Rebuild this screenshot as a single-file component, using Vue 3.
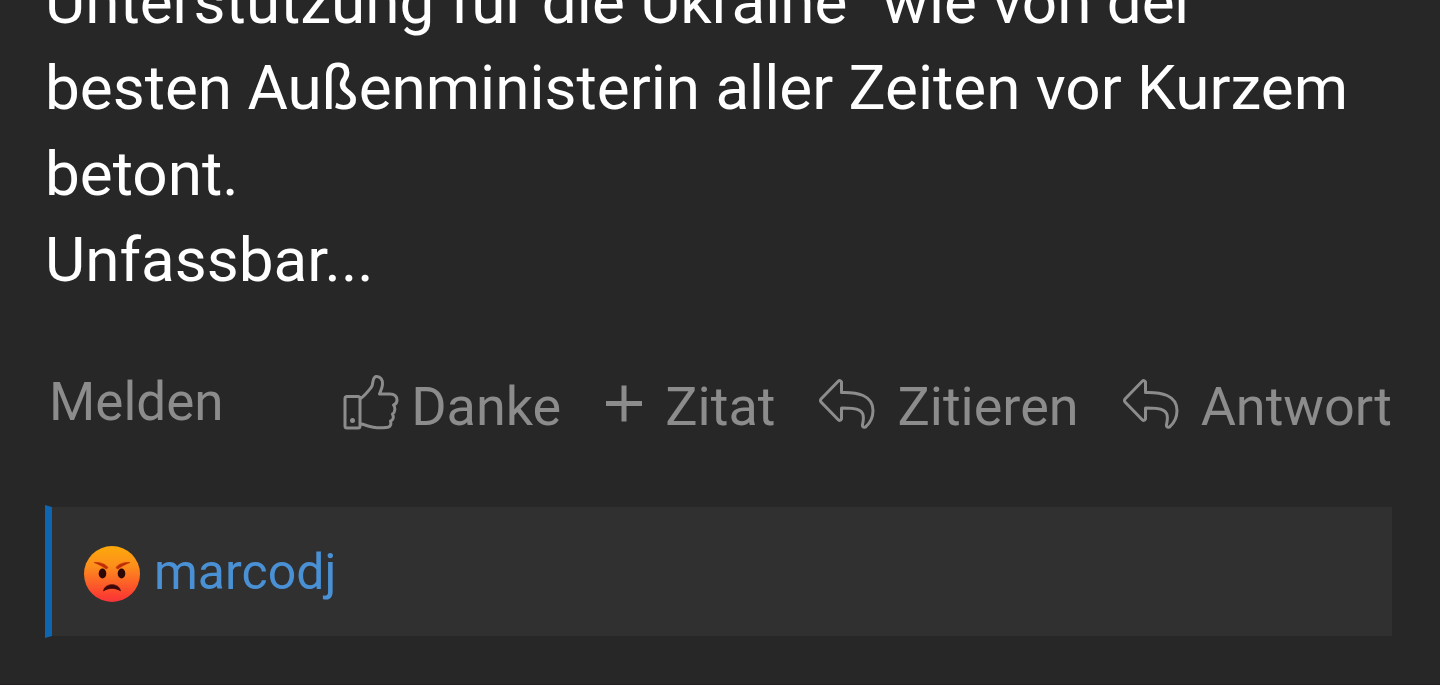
<script setup>
const actions = [
  { label: 'Danke', icon: 'thumb' },
  { label: 'Zitat', icon: 'plus' },
  { label: 'Zitieren', icon: 'reply' },
  { label: 'Antwort', icon: 'reply' },
]
</script>

<template>
  <article class="post">
    <p class="body">
      Unterstützung für die Ukraine" wie von der besten Außenministerin aller Zeiten vor Kurzem betont.<br />Unfassbar...
    </p>

    <footer class="bar">
      <a class="report" href="#melden">Melden</a>
      <div class="actions">
        <a v-for="a in actions" :key="a.label" class="action" :class="a.icon" :href="'#' + a.label.toLowerCase()">
          <svg v-if="a.icon === 'thumb'" class="icon" width="56" height="56" viewBox="0 0 56 56" aria-hidden="true">
            <path d="M2 24.500Q2 22.500 4 22.500H15Q17 22.500 17 24.500V52Q17 54 15 54H4Q2 54 2 52ZM17 25C22 21.500 25 17.500 28.500 13C30.500 10 29 3.500 33 2.500C37.500 2 40 6 39.500 10.500C39.300 14 37.500 17 36.500 20H47C51.500 20 54 22.500 54 26C54 29 52.500 30.500 50.500 31C52.500 33 52.500 38 49.500 40C51 43 50.500 46 47.500 47C48.500 50.500 47.500 53.500 43 53.500C33 54.500 28 53 17 49.500" />
            <circle class="dot" cx="9.500" cy="46.500" r="2.500" />
          </svg>
          <svg v-else-if="a.icon === 'plus'" class="icon" width="38" height="56" viewBox="0 0 38 56" aria-hidden="true">
            <path class="cross" d="M1 29.500H37M19 11.500V47.500" />
          </svg>
          <svg v-else class="icon" width="56" height="56" viewBox="0 0 56 56" aria-hidden="true">
            <path class="arrow" d="M19 7.500Q21.500 5.500 22.500 8V18.500C38 18 54 21 54 36.500C54 45 50 50 46.500 53Q43 54 43.500 50.500C45.500 42 45 35.500 34 34.500C30 34 26 34 22.500 34V45Q21.500 47.500 19 45.500L2 28Q1 26.500 2 25Z" />
          </svg>
          <span>{{ a.label }}</span>
        </a>
      </div>
    </footer>

    <section class="reactions">
      <svg class="emoji" width="56" height="56" viewBox="0 0 56 56" role="img" aria-label="Wütend">
        <defs>
          <linearGradient id="face" x1="0" y1="0" x2="0" y2="1">
            <stop offset="0" stop-color="#fda90b" />
            <stop offset="0.350" stop-color="#fd8f1b" />
            <stop offset="0.880" stop-color="#fc4030" />
            <stop offset="1" stop-color="#f8343a" />
          </linearGradient>
        </defs>
        <circle cx="28" cy="28" r="28" fill="url(#face)" />
        <path d="M10 16.500C15 16 21 17.500 23.800 21.200Q23.500 23.500 21.500 22.500C18 20 14 18 10 16.500ZM46 16.500C41 16 35 17.500 32.200 21.200Q32.500 23.500 34.500 22.500C38 20 42 18 46 16.500Z" fill="#c02c08" stroke="#c02c08" stroke-width="0.600" />
        <ellipse cx="18.500" cy="27.500" rx="3.800" ry="5" fill="#2b0805" />
        <ellipse cx="37.500" cy="27.500" rx="3.800" ry="5" fill="#2b0805" />
        <path d="M19.500 45C20.500 36.500 35.500 36.500 36.500 45C32 41.500 24 41.500 19.500 45Z" fill="#3c0708" stroke="#3c0708" stroke-width="0.600" />
      </svg>
      <a class="user" href="#marcodj">marcodj</a>
    </section>
  </article>
</template>

<style>
body {
  background: #272727;
}
</style>

<style scoped>
.post {
  overflow: hidden;
  min-height: 100vh;
  box-sizing: border-box;
  padding: 0 48px 46px 45px;
  border-bottom: 1px solid #231f23;
  background: #272727;
  color: #fff;
  font-family: Roboto, "Noto Sans", sans-serif;
}

.body {
  margin: -41px 0 0;
  font-size: 62px;
  line-height: 86px;
}

.bar {
  display: flex;
  justify-content: space-between;
  align-items: flex-start;
  margin-top: 69px;
  padding-left: 4px;
  font-size: 54px;
  line-height: 60px;
}

a {
  text-decoration: none;
}

.report,
.action {
  color: #8c8c8c;
}

.report {
  font-size: 53px;
}

.actions {
  display: flex;
  gap: 44px;
  padding-top: 5px;
}

.action {
  display: flex;
  align-items: flex-start;
  gap: 22px;
}

.action.thumb {
  gap: 12px;
}

.icon {
  flex: none;
  margin-top: -3px;
  fill: none;
  stroke: #8c8c8c;
  stroke-width: 3;
  stroke-linejoin: round;
}

.icon .dot {
  fill: #8c8c8c;
  stroke: none;
}

.icon .cross {
  stroke-width: 5;
}

.icon .arrow {
  stroke-width: 3;
}

.reactions {
  display: flex;
  align-items: center;
  gap: 14px;
  margin-top: 68px;
  padding: 33px 32px 32px;
  border: 2px solid transparent;
  border-left: 7px solid #0f66b0;
  border-right: 0;
  background: #303030;
  background-clip: padding-box;
  font-size: 50px;
  line-height: 64px;
}

.emoji {
  flex: none;
  margin-top: 4px;
}

.user {
  color: #4a90d4;
}
</style>
